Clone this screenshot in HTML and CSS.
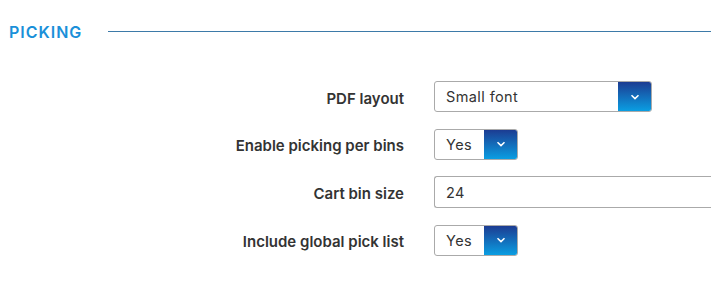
FILE: index.html
```html
<!DOCTYPE html>
<html lang="en">
<head>
  <meta charset="UTF-8" />
  <title>Picking settings</title>
  <link rel="stylesheet" href="styles.css">
</head>
<body>
  <div class="section-head">
    <h2>PICKING</h2>
    <div class="rule"></div>
  </div>

  <div class="form">
    <label class="label">PDF layout</label>
    <div class="select wide">
      <span class="value">Small font</span>
      <span class="btn"><svg width="10" height="6" viewBox="0 0 10 6"><path d="M1.5 1.2 L5 4.6 L8.5 1.2" fill="none" stroke="#fff" stroke-width="1.5"/></svg></span>
    </div>

    <label class="label">Enable picking per bins</label>
    <div class="select">
      <span class="value">Yes</span>
      <span class="btn"><svg width="10" height="6" viewBox="0 0 10 6"><path d="M1.5 1.2 L5 4.6 L8.5 1.2" fill="none" stroke="#fff" stroke-width="1.5"/></svg></span>
    </div>

    <label class="label">Cart bin size</label>
    <div class="input">24</div>

    <label class="label">Include global pick list</label>
    <div class="select">
      <span class="value">Yes</span>
      <span class="btn"><svg width="10" height="6" viewBox="0 0 10 6"><path d="M1.5 1.2 L5 4.6 L8.5 1.2" fill="none" stroke="#fff" stroke-width="1.5"/></svg></span>
    </div>
  </div>
</body>
</html>
```

FILE: styles.css
```css
body {
  margin: 0;
  background: #fff;
  font-family: 'Inter', 'DejaVu Sans', sans-serif;
  color: #333;
  overflow: hidden;
}
.section-head {
  display: flex;
  align-items: center;
  padding: 22px 0 0 9px;
  height: 19px;
}
.section-head h2 {
  margin: 0;
  font-size: 16px;
  font-weight: 600;
  color: #1a90d9;
  letter-spacing: 1px;
}
.rule {
  flex: 1;
  height: 1px;
  background: #3d7aa8;
  margin-left: 26px;
}
.form {
  display: grid;
  grid-template-columns: 404px 1fr;
  column-gap: 30px;
  row-gap: 16.5px;
  margin-top: 40px;
  align-items: center;
}
.label {
  text-align: right;
  font-size: 15px;
  font-weight: 600;
  color: #333;
  padding-top: 3px;
}
.select {
  display: flex;
  width: 84px;
  height: 31px;
  box-sizing: border-box;
  border: 1px solid #aaa;
  border-radius: 3px;
  overflow: hidden;
  font-size: 14.5px;
  color: #333;
}
.select.wide {
  width: 218px;
}
.value {
  flex: 1;
  display: flex;
  align-items: center;
  padding-left: 11px;
  letter-spacing: 0.4px;
}
.btn {
  width: 33px;
  display: flex;
  align-items: center;
  justify-content: center;
  background: linear-gradient(#1c3c92, #0a9ee2);
}
.input {
  height: 32px;
  box-sizing: border-box;
  border: 1px solid #aaa;
  border-right: none;
  border-radius: 3px 0 0 3px;
  padding-left: 11px;
  display: flex;
  align-items: center;
  font-size: 14.5px;
  letter-spacing: 0.4px;
}
```
